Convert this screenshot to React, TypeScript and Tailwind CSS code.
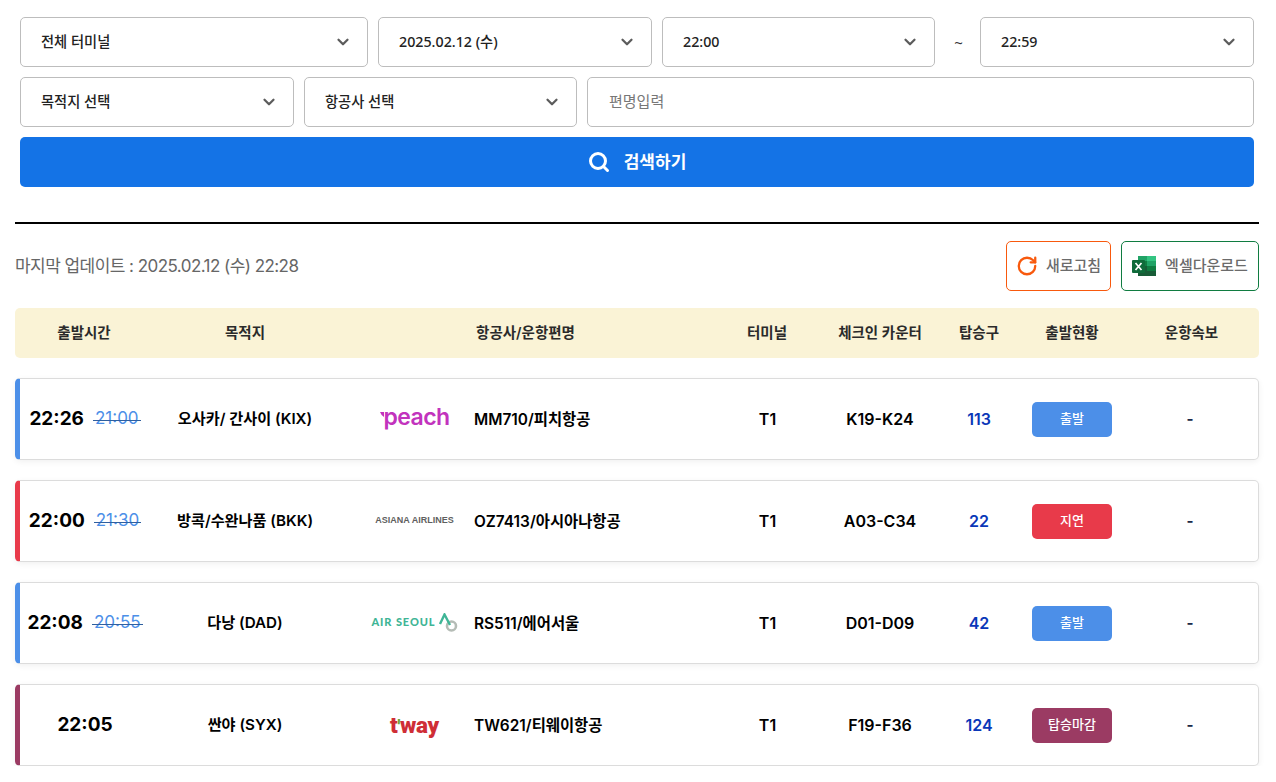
import React from 'react';
import { ChevronDown, RotateCw } from 'lucide-react';

interface Flight {
  time: string;
  planned?: string;
  dest: string;
  logo: React.ReactNode;
  flight: string;
  counter: string;
  gate: string;
  status: string;
  bar: string;
  badge: string;
}

const PeachLogo = () => (
  <span className="mb-[3px] flex items-start font-['Inter',sans-serif] text-[23px] leading-none font-semibold tracking-[-0.6px] text-[#c233bd]">
    <svg width="4" height="6" viewBox="0 0 4 6" className="mt-[6px]">
      <path d="M0 0 H4 V5 Q1.5 4 0 0 Z" fill="#c233bd" />
    </svg>
    peach
  </span>
);

const AsianaLogo = () => (
  <span className="font-['Liberation_Sans',sans-serif] text-[9px] leading-none font-bold whitespace-nowrap text-[#5f5f5f]">ASIANA AIRLINES</span>
);

const AirSeoulLogo = () => (
  <span className="flex items-center gap-[4px]">
    <span className="mb-[3px] font-['Lato',sans-serif] text-[11px] leading-none font-black tracking-[0.9px] whitespace-nowrap text-[#3fb596]">AIR SEOUL</span>
    <svg width="20" height="20" viewBox="0 0 20 20" className="ml-[-2px]">
      <circle cx="13.5" cy="13" r="4.5" fill="none" stroke="#b5bcb6" strokeWidth="2.6" />
      <path d="M2 11 L6.5 1.5 L12 12" fill="none" stroke="#3fb596" strokeWidth="2.4" />
    </svg>
  </span>
);

const TwayLogo = () => (
  <span className="flex items-baseline font-['Roboto',sans-serif] text-[22.5px] leading-none font-black tracking-[-0.3px] text-[#cf2e36]">
    t<span className="text-[18px] text-[#6aa534]">'</span>way
  </span>
);

const flights: Flight[] = [
  { time: '22:26', planned: '21:00', dest: '오사카/ 간사이 (KIX)', logo: <PeachLogo />, flight: 'MM710/피치항공', counter: 'K19-K24', gate: '113', status: '출발', bar: 'border-l-[#4c8fe8]', badge: 'bg-[#4c8fe8]' },
  { time: '22:00', planned: '21:30', dest: '방콕/수완나품 (BKK)', logo: <AsianaLogo />, flight: 'OZ7413/아시아나항공', counter: 'A03-C34', gate: '22', status: '지연', bar: 'border-l-[#e83a4a]', badge: 'bg-[#e83a4a]' },
  { time: '22:08', planned: '20:55', dest: '다낭 (DAD)', logo: <AirSeoulLogo />, flight: 'RS511/에어서울', counter: 'D01-D09', gate: '42', status: '출발', bar: 'border-l-[#4c8fe8]', badge: 'bg-[#4c8fe8]' },
  { time: '22:05', dest: '싼야 (SYX)', logo: <TwayLogo />, flight: 'TW621/티웨이항공', counter: 'F19-F36', gate: '124', status: '탑승마감', bar: 'border-l-[#9b3b63]', badge: 'bg-[#9b3b63]' },
];

const Select = ({ label, className }: { label: string; className: string }) => (
  <div className={`flex h-[50px] items-center justify-between rounded-[5px] border border-[#bdbdbd] bg-white pl-5 pr-[15px] ${className}`}>
    <span className="mb-[1px] text-[14.25px] font-medium text-[#222]">{label}</span>
    <ChevronDown size={18} strokeWidth={3} className="text-[#5c5c5c]" />
  </div>
);

const ExcelIcon = () => (
  <svg width="24" height="20" viewBox="0 0 24 20">
    <rect x="6" y="0" width="18" height="20" rx="1" fill="#21a366" />
    <rect x="15" y="0" width="9" height="5" fill="#33c481" />
    <rect x="6" y="0" width="9" height="5" fill="#21a366" />
    <rect x="6" y="5" width="9" height="5" fill="#107c41" />
    <rect x="15" y="5" width="9" height="5" fill="#21a366" />
    <rect x="6" y="10" width="9" height="5" fill="#185c37" />
    <rect x="15" y="10" width="9" height="5" fill="#107c41" />
    <rect x="6" y="15" width="18" height="5" fill="#185c37" />
    <rect x="0" y="4" width="13" height="13" rx="1" fill="#0f6b3a" />
    <path d="M3.5 7 L9.5 14 M9.5 7 L3.5 14" stroke="#fff" strokeWidth="1.7" />
  </svg>
);

export default function App() {
  return (
    <div className="w-[1274px] bg-white font-['Inter','Noto_Sans_CJK_KR',sans-serif] text-[#111]">
      <div className="flex flex-col gap-2.5 px-5 pt-[17px] font-['Noto_Sans','Noto_Sans_CJK_KR',sans-serif]">
        <div className="flex items-center">
          <Select label="전체 터미널" className="w-[348px]" />
          <Select label="2025.02.12 (수)" className="ml-2.5 w-[274px]" />
          <Select label="22:00" className="ml-2.5 w-[273px]" />
          <span className="w-[45px] pl-[2px] text-center text-[15px] text-[#333]">~</span>
          <Select label="22:59" className="w-[274px]" />
        </div>
        <div className="flex items-center gap-2.5">
          <Select label="목적지 선택" className="w-[274px]" />
          <Select label="항공사 선택" className="w-[273px]" />
          <div className="flex h-[50px] flex-1 items-center rounded-[5px] border border-[#bdbdbd] bg-white px-[21px]">
            <span className="mb-[1px] text-[15px] text-[#777]">편명입력</span>
          </div>
        </div>
        <div className="flex h-[50px] items-center justify-center gap-[14px] rounded-[5px] bg-[#1473e6]">
          <svg width="22" height="22" viewBox="0 0 22 22" fill="none" stroke="#fff" strokeWidth="3" strokeLinecap="round">
            <circle cx="10" cy="10" r="7.5" />
            <path d="M15.5 15.5 L19.5 19.5" />
          </svg>
          <span className="text-[17px] font-semibold text-white">검색하기</span>
        </div>
      </div>

      <div className="mx-[15px] mt-[35px] h-[2px] bg-black" />

      <div className="mx-[15px] mt-[17px] flex items-center justify-between">
        <span className="mt-[2px] text-[17px] font-normal tracking-[-0.55px] text-[#666]">마지막 업데이트 : 2025.02.12 (수) 22:28</span>
        <div className="flex gap-2.5">
          <div className="flex h-[50px] w-[105px] items-center justify-center gap-[8px] rounded-[5px] border border-[#f8590d] bg-white">
            <RotateCw size={22} strokeWidth={2.5} className="text-[#f8590d]" />
            <span className="mt-[1px] text-[15px] font-medium text-[#6b6b6b]">새로고침</span>
          </div>
          <div className="flex h-[50px] w-[138px] items-center justify-center gap-[9px] rounded-[5px] border border-[#107c41] bg-white">
            <ExcelIcon />
            <span className="mt-[1px] text-[15px] font-medium text-[#6b6b6b]">엑셀다운로드</span>
          </div>
        </div>
      </div>

      <div className="mx-[15px] mt-[17px] grid h-[50px] grid-cols-[138px_184px_377px_106px_120px_78px_108px_131px] items-center rounded-[5px] bg-[#faf3d6] text-center text-[14.5px] font-semibold text-[#2a2a2a]">
        <span>출발시간</span>
        <span>목적지</span>
        <span>항공사/운항편명</span>
        <span>터미널</span>
        <span>체크인 카운터</span>
        <span>탑승구</span>
        <span>출발현황</span>
        <span>운항속보</span>
      </div>

      <div className="mx-[15px] mt-5 flex flex-col gap-5">
        {flights.map((f) => (
          <div key={f.flight} className={`grid h-[82px] grid-cols-[133px_184px_378px_105px_120px_78px_108px_128px] items-center rounded-[5px] border border-[#dcdcdc] border-l-[5px] bg-white text-center font-semibold text-black shadow-[0_2px_6px_rgba(0,0,0,0.06)] ${f.bar}`}>
            <div className="flex items-center justify-center gap-[9px] pr-[3px]">
              <span className="text-[19px] font-bold">{f.time}</span>
              {f.planned && (
                <span className="relative px-[2px] text-[17px] font-normal text-[#4c8fe8]">
                  {f.planned}
                  <span className="absolute inset-x-0 top-[52%] h-px bg-[#2f5f9f]" />
                </span>
              )}
            </div>
            <span className="mt-[1px] text-[15.2px]">{f.dest}</span>
            <div className="flex items-center text-left">
              <div className="flex w-[137px] items-center justify-center pl-[18px]">{f.logo}</div>
              <span className="mt-[1px] text-[15.4px] font-semibold">{f.flight}</span>
            </div>
            <span className="text-[16px]">T1</span>
            <span className="text-[16px]">{f.counter}</span>
            <span className="text-[16px] text-[#0a37b8]">{f.gate}</span>
            <div className="flex justify-center">
              <span className={`flex h-[35px] w-[80px] items-center justify-center rounded-[5px] text-[13px] font-medium text-white ${f.badge}`}>{f.status}</span>
            </div>
            <span className="text-[15px] font-bold text-[#1c2a4a]">-</span>
          </div>
        ))}
      </div>
    </div>
  );
}
